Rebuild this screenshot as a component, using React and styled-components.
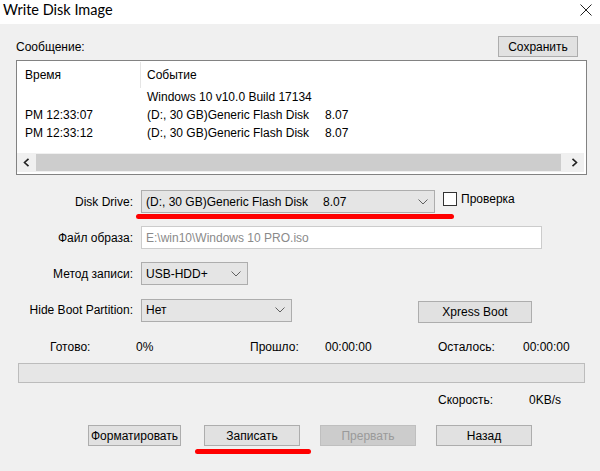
import React from "react";
import styled, { createGlobalStyle } from "styled-components";

const GlobalStyle = createGlobalStyle`
  html, body {
    margin: 0;
    padding: 0;
    background: #f0f0f0;
  }
  body {
    font-family: "Liberation Sans", Arial, sans-serif;
    font-size: 12px;
    color: #000;
  }
`;

const logRows = [
  { key: 1, time: "", event: "Windows 10 v10.0 Build 17134", ver: "" },
  { key: 2, time: "PM 12:33:07", event: "(D:, 30 GB)Generic Flash Disk", ver: "8.07" },
  { key: 3, time: "PM 12:33:12", event: "(D:, 30 GB)Generic Flash Disk", ver: "8.07" },
];

const Chevron = () => (
  <svg width="10" height="6" viewBox="0 0 10 6">
    <polyline points="0.5,0.5 5,5 9.5,0.5" fill="none" stroke="#606060" strokeWidth="1" />
  </svg>
);

const App = () => {
  return (
    <Window>
      <GlobalStyle />
      <TitleBar>
        <Title>Write Disk Image</Title>
        <CloseIcon width="12" height="12" viewBox="0 0 12 12">
          <path d="M0.5 0.5 L11.5 11.5 M11.5 0.5 L0.5 11.5" stroke="#222" strokeWidth="1" />
        </CloseIcon>
      </TitleBar>

      <Body>
        <MessageHeader>
          <MessageLabel>Сообщение:</MessageLabel>
          <Button $w={80} $h={21}>Сохранить</Button>
        </MessageHeader>

        <LogBox>
          <LogHeader>
            <TimeCell>Время</TimeCell>
            <HeaderSep />
            <EventCell>Событие</EventCell>
          </LogHeader>
          {logRows.map((row) => (
            <LogRow key={row.key}>
              <TimeCell>{row.time}</TimeCell>
              <EventCell $pad={7}>
                <EventName>{row.event}</EventName>
                <span>{row.ver}</span>
              </EventCell>
            </LogRow>
          ))}
          <HScroll>
            <ScrollArrow>
              <svg width="7" height="9" viewBox="0 0 7 9">
                <polyline points="5.5,0.8 1.5,4.5 5.5,8.2" fill="none" stroke="#222" strokeWidth="1.6" />
              </svg>
            </ScrollArrow>
            <ScrollThumb />
            <ScrollArrow>
              <svg width="7" height="9" viewBox="0 0 7 9">
                <polyline points="1.5,0.8 5.5,4.5 1.5,8.2" fill="none" stroke="#222" strokeWidth="1.6" />
              </svg>
            </ScrollArrow>
          </HScroll>
        </LogBox>

        <FormRow $mt={15}>
          <FieldLabel>Disk Drive:</FieldLabel>
          <Control>
            <Combo $w={294}>
              <ComboText>
                <EventName $w={177}>(D:, 30 GB)Generic Flash Disk</EventName>
                <span>8.07</span>
              </ComboText>
              <Chevron />
              <RedMark $left={-6} $right={-20} $top={23} />
            </Combo>
            <CheckWrap>
              <CheckBox />
              <span>Проверка</span>
            </CheckWrap>
          </Control>
        </FormRow>

        <FormRow $mt={13}>
          <FieldLabel>Файл образа:</FieldLabel>
          <Control>
            <PathInput>E:\win10\Windows 10 PRO.iso</PathInput>
          </Control>
        </FormRow>

        <FormRow $mt={13}>
          <FieldLabel>Метод записи:</FieldLabel>
          <Control>
            <Combo $w={107}>
              <ComboText>USB-HDD+</ComboText>
              <Chevron />
            </Combo>
          </Control>
        </FormRow>

        <FormRow $mt={12}>
          <FieldLabel>Hide Boot Partition:</FieldLabel>
          <Control>
            <Combo $w={151}>
              <ComboText>Нет</ComboText>
              <Chevron />
            </Combo>
            <XpressWrap>
              <Button $w={114} $h={22}>Xpress Boot</Button>
            </XpressWrap>
          </Control>
        </FormRow>

        <StatusGrid $mt={17}>
          <span>Готово:</span>
          <span>0%</span>
          <span>Прошло:</span>
          <span>00:00:00</span>
          <span>Осталось:</span>
          <span>00:00:00</span>
        </StatusGrid>

        <ProgressBar />

        <StatusGrid $mt={10}>
          <span />
          <span />
          <span />
          <span />
          <span>Скорость:</span>
          <SpeedValue>0KB/s</SpeedValue>
        </StatusGrid>

        <ButtonBar>
          <Button $w={93} $h={21}>Форматировать</Button>
          <ButtonSlot $ml={23}>
            <Button $w={96} $h={21}>Записать</Button>
            <RedMark $left={-9} $right={-11} $top={24} />
          </ButtonSlot>
          <ButtonSlot $ml={20}>
            <Button $w={96} $h={21} disabled>
              Прервать
            </Button>
          </ButtonSlot>
          <ButtonSlot $ml={20}>
            <Button $w={96} $h={21}>Назад</Button>
          </ButtonSlot>
        </ButtonBar>
      </Body>
    </Window>
  );
};

export default App;

const Window = styled.div`
  width: 600px;
  height: 471px;
  background: #f0f0f0;
  overflow: hidden;
  display: flex;
  flex-direction: column;
`;

const TitleBar = styled.div`
  height: 24px;
  background: #ffffff;
  display: flex;
  align-items: center;
  justify-content: space-between;
  padding: 0 8px 0 3px;
  box-sizing: border-box;
`;

const Title = styled.span`
  font-family: "Lato", "Liberation Sans", sans-serif;
  font-size: 14.5px;
  color: #000;
  margin-top: -5px;
`;

const CloseIcon = styled.svg`
  margin-top: -4px;
`;

const Body = styled.div`
  display: flex;
  flex-direction: column;
  padding: 0 13px 0 16px;
`;

const MessageHeader = styled.div`
  display: flex;
  align-items: flex-end;
  justify-content: space-between;
  margin-top: 12px;
  padding-right: 9px;
  margin-bottom: 3px;
`;

const MessageLabel = styled.span`
  padding-bottom: 3px;
`;

const Button = styled.button`
  width: ${(p) => p.$w}px;
  height: ${(p) => p.$h}px;
  box-sizing: border-box;
  padding: 0;
  background: #e1e1e1;
  border: 1px solid #adadad;
  font-family: "Liberation Sans", Arial, sans-serif;
  font-size: 12px;
  color: #000;
  white-space: nowrap;
  overflow: visible;
  &:disabled {
    background: #cccccc;
    border-color: #bfbfbf;
    color: #9a9a9a;
  }
`;

const LogBox = styled.div`
  height: 115px;
  box-sizing: border-box;
  background: #ffffff;
  border: 1px solid #828282;
  padding: 0 2px 2px 0;
  display: flex;
  flex-direction: column;
`;

const LogHeader = styled.div`
  height: 27px;
  display: flex;
  align-items: center;
`;

const HeaderSep = styled.div`
  width: 1px;
  align-self: stretch;
  margin: 1px 0 0;
  background: #e5e5e5;
`;

const LogRow = styled.div`
  height: 18px;
  display: flex;
  align-items: center;
`;

const TimeCell = styled.div`
  width: 123px;
  padding-left: 8px;
  box-sizing: border-box;
  white-space: nowrap;
`;

const EventCell = styled.div`
  padding-left: ${(p) => p.$pad || 6}px;
  display: flex;
  white-space: nowrap;
`;

const EventName = styled.span`
  display: inline-block;
  width: ${(p) => p.$w || 178}px;
`;

const HScroll = styled.div`
  margin-top: auto;
  height: 19px;
  display: flex;
  background: #f0f0f0;
`;

const ScrollArrow = styled.div`
  width: 19px;
  display: flex;
  align-items: center;
  justify-content: center;
`;

const ScrollThumb = styled.div`
  flex: 1;
  background: #cdcdcd;
  margin: 1px 4px 1px 0;
`;

const FormRow = styled.div`
  display: grid;
  grid-template-columns: 117px 1fr;
  column-gap: 8px;
  align-items: center;
  margin-top: ${(p) => p.$mt}px;
`;

const FieldLabel = styled.span`
  text-align: right;
  white-space: nowrap;
`;

const Control = styled.div`
  display: flex;
  align-items: center;
`;

const Combo = styled.div`
  position: relative;
  width: ${(p) => p.$w}px;
  height: 23px;
  box-sizing: border-box;
  background: #e5e5e5;
  border: 1px solid #adadad;
  display: flex;
  align-items: center;
  justify-content: space-between;
  padding: 0 6px 0 4px;
`;

const ComboText = styled.span`
  display: flex;
  white-space: nowrap;
`;

const RedMark = styled.div`
  position: absolute;
  left: ${(p) => p.$left}px;
  right: ${(p) => p.$right}px;
  top: ${(p) => p.$top}px;
  height: 5px;
  border-radius: 3px;
  background: #ff0000;
`;

const CheckWrap = styled.label`
  display: flex;
  align-items: center;
  gap: 4px;
  margin-left: 8px;
  margin-top: -5px;
`;

const CheckBox = styled.span`
  width: 14px;
  height: 14px;
  box-sizing: border-box;
  background: #ffffff;
  border: 1px solid #333333;
`;

const PathInput = styled.div`
  width: 401px;
  height: 23px;
  box-sizing: border-box;
  background: #ffffff;
  border: 1px solid #cccccc;
  color: #8a8a8a;
  display: flex;
  align-items: center;
  padding-left: 4px;
`;

const XpressWrap = styled.div`
  margin-left: 126px;
  margin-top: 4px;
`;

const StatusGrid = styled.div`
  display: grid;
  grid-template-columns: 86px 114px 75px 113px 85px 1fr;
  padding-left: 34px;
  margin-top: ${(p) => p.$mt}px;
  white-space: nowrap;
`;

const SpeedValue = styled.span`
  padding-left: 6px;
`;

const ProgressBar = styled.div`
  height: 20px;
  box-sizing: border-box;
  margin: 9px 2px 0 2px;
  background: #e6e6e6;
  border: 1px solid #bcbcbc;
`;

const ButtonBar = styled.div`
  display: flex;
  padding-left: 72px;
  margin-top: 18px;
`;

const ButtonSlot = styled.div`
  position: relative;
  margin-left: ${(p) => p.$ml}px;
`;
